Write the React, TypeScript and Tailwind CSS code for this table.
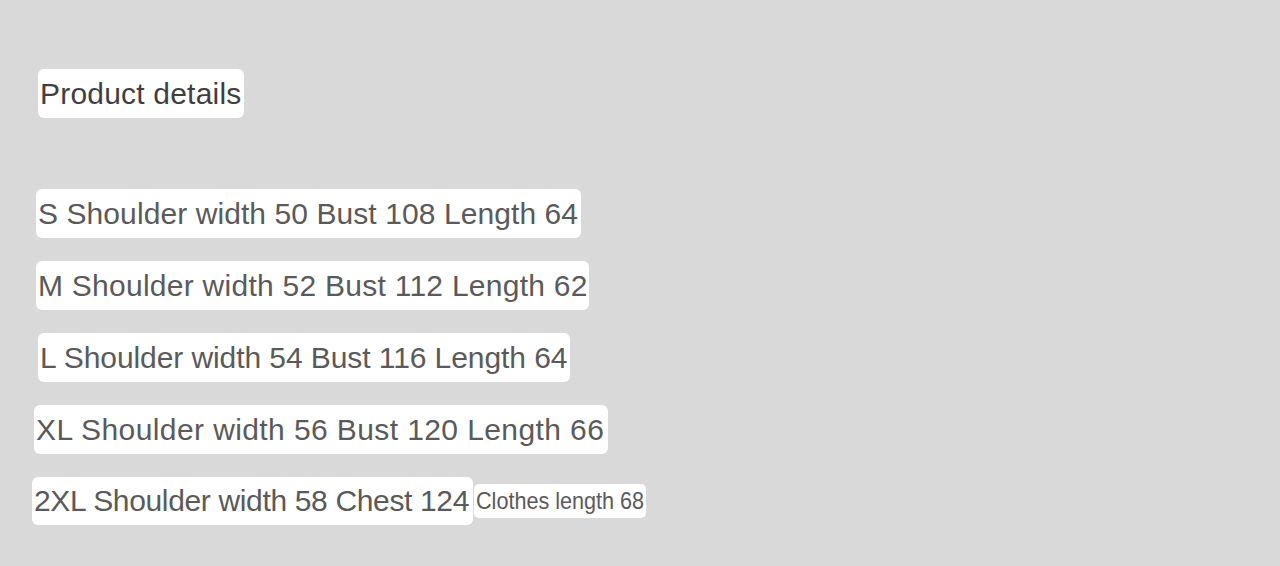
const rows = [
  { text: "S Shoulder width 50 Bust 108 Length 64", ml: "ml-[36px]", w: "w-[545px]", tr: "tracking-[0.08px]" },
  { text: "M Shoulder width 52 Bust 112 Length 62", ml: "ml-[36px]", w: "w-[553px]", tr: "tracking-[0.26px]" },
  { text: "L Shoulder width 54 Bust 116 Length 64", ml: "ml-[38px]", w: "w-[532px]", tr: "tracking-[-0.08px]" },
  { text: "XL Shoulder width 56 Bust 120 Length 66", ml: "ml-[34px]", w: "w-[574px]", tr: "tracking-[0.4px]" },
];

export default function App() {
  return (
    <main className="w-full h-[566px] bg-[#d9d9d9] pt-[69px] font-['Liberation_Sans',Arial,sans-serif] overflow-hidden">
      <div className="ml-[38px] w-[206px] h-[49px] bg-white rounded-[6px] flex items-center pl-[2px] text-[30px] tracking-[0.2px] text-[#3f3f3f] leading-none whitespace-nowrap">
        Product details
      </div>

      <div className="mt-[71px] flex flex-col gap-[23px]">
        {rows.map((r) => (
          <div
            key={r.text}
            className={`${r.ml} ${r.w} ${r.tr} h-[49px] bg-white rounded-[6px] flex items-center pl-[2px] text-[30px] text-[#5a5a5a] leading-none whitespace-nowrap`}
          >
            {r.text}
          </div>
        ))}
        <div className="ml-[32px] flex items-start gap-[1px]">
          <div className="w-[441px] h-[48px] bg-white rounded-[6px] flex items-center pl-[2px] text-[30px] tracking-[-0.35px] text-[#5a5a5a] leading-none whitespace-nowrap">
            2XL Shoulder width 58 Chest 124
          </div>
          <div className="mt-[7px] w-[172px] h-[34px] bg-white rounded-[5px] flex items-center pl-[2px] text-[24px] text-[#5a5a5a] leading-none whitespace-nowrap">
            <span className="inline-block origin-left scale-x-90">Clothes length 68</span>
          </div>
        </div>
      </div>
    </main>
  );
}
